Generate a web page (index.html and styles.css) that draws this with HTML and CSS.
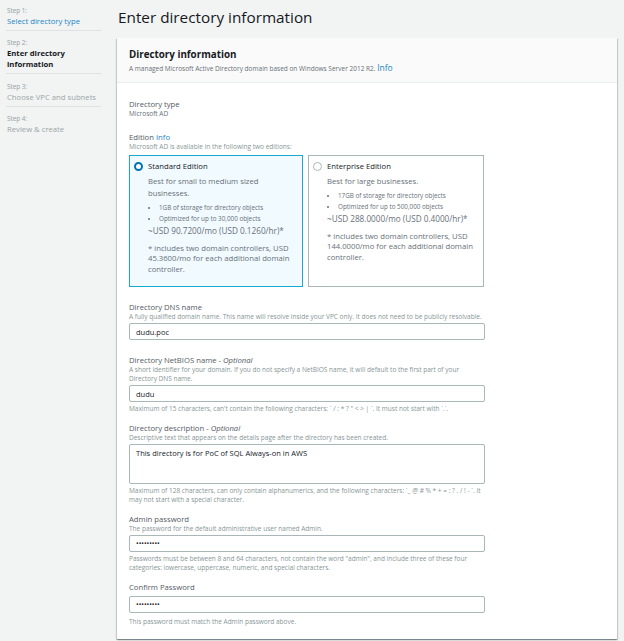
FILE: index.html
```html
<!DOCTYPE html>
<html lang="en">
<head>
<meta charset="utf-8">
<title>Enter directory information</title>
<link rel="stylesheet" href="styles.css">
</head>
<body>
<div class="layout">
  <nav class="steps">
    <div class="step">
      <div class="step-num">Step 1:</div>
      <a class="step-name link" href="#">Select directory type</a>
    </div>
    <div class="step">
      <div class="step-num">Step 2:</div>
      <div class="step-name current">Enter directory information</div>
    </div>
    <div class="step">
      <div class="step-num">Step 3:</div>
      <div class="step-name muted">Choose VPC and subnets</div>
    </div>
    <div class="step last">
      <div class="step-num">Step 4:</div>
      <div class="step-name muted">Review &amp; create</div>
    </div>
  </nav>

  <main class="main">
    <h1 class="page-title">Enter directory information</h1>
    <section class="panel">
      <header class="panel-head">
        <h2 class="panel-title">Directory information</h2>
        <p class="panel-sub">A managed Microsoft Active Directory domain based on Windows Server 2012 R2. <a class="info big" href="#">Info</a></p>
      </header>
      <div class="panel-body">
        <div class="field type">
          <div class="label">Directory type</div>
          <div class="value">Microsoft AD</div>
        </div>

        <div class="field edition">
          <div class="label">Edition <a class="info" href="#">Info</a></div>
          <div class="desc">Microsoft AD is available in the following two editions:</div>
          <div class="cards">
            <div class="card selected">
              <div class="card-title"><span class="radio on"></span>Standard Edition</div>
              <div class="card-body">
                <p class="card-text">Best for small to medium sized businesses.</p>
                <ul class="bullets">
                  <li>1GB of storage for directory objects</li>
                  <li>Optimized for up to 30,000 objects</li>
                </ul>
                <p class="card-text price">~USD 90.7200/mo (USD 0.1260/hr)*</p>
                <p class="card-text note">* includes two domain controllers, USD 45.3600/mo for each additional domain controller.</p>
              </div>
            </div>
            <div class="card">
              <div class="card-title"><span class="radio"></span>Enterprise Edition</div>
              <div class="card-body">
                <p class="card-text">Best for large businesses.</p>
                <ul class="bullets">
                  <li>17GB of storage for directory objects</li>
                  <li>Optimized for up to 500,000 objects</li>
                </ul>
                <p class="card-text price">~USD 288.0000/mo (USD 0.4000/hr)*</p>
                <p class="card-text note">* includes two domain controllers, USD 144.0000/mo for each additional domain controller.</p>
              </div>
            </div>
          </div>
        </div>

        <div class="field dns">
          <div class="label">Directory DNS name</div>
          <div class="desc">A fully qualified domain name. This name will resolve inside your VPC only. It does not need to be publicly resolvable.</div>
          <input class="input" type="text" value="dudu.poc">
        </div>

        <div class="field">
          <div class="label">Directory NetBIOS name - <i>Optional</i></div>
          <div class="desc narrow">A short identifier for your domain. If you do not specify a NetBIOS name, it will default to the first part of your Directory DNS name.</div>
          <input class="input" type="text" value="dudu">
          <div class="hint">Maximum of 15 characters, can't contain the following characters: ` / : * ? " &lt; &gt; | `. It must not start with `.`.</div>
        </div>

        <div class="field">
          <div class="label">Directory description - <i>Optional</i></div>
          <div class="desc">Descriptive text that appears on the details page after the directory has been created.</div>
          <textarea class="input area">This directory is for PoC of SQL Always-on in AWS</textarea>
          <div class="hint narrow">Maximum of 128 characters, can only contain alphanumerics, and the following characters: `_ @ # % * + = : ? . / ! - `. It may not start with a special character.</div>
        </div>

        <div class="field">
          <div class="label">Admin password</div>
          <div class="desc">The password for the default administrative user named Admin.</div>
          <input class="input pw" type="password" value="aaaaaaaaa">
          <div class="hint narrow">Passwords must be between 8 and 64 characters, not contain the word "admin", and include three of these four categories: lowercase, uppercase, numeric, and special characters.</div>
        </div>

        <div class="field last">
          <div class="label spaced">Confirm Password</div>
          <input class="input pw" type="password" value="aaaaaaaaa">
          <div class="hint low">This password must match the Admin password above.</div>
        </div>
      </div>
    </section>
  </main>
</div>
</body>
</html>
```

FILE: styles.css
```css
* { box-sizing: border-box; }
html, body { margin: 0; padding: 0; }
body {
  background: #f2f3f3;
  font-family: "Open Sans", "Liberation Sans", sans-serif;
  color: #16191f;
  width: 624px;
  height: 641px;
  overflow: hidden;
}
p { margin: 0; }
a { text-decoration: none; }

.layout { display: flex; }

/* ---------- steps sidebar ---------- */
.steps {
  width: 95px;
  margin-left: 6px;
  padding-top: 4.5px;
  flex: none;
}
.step {
  border-bottom: 1px solid #dfe2e2;
  padding: 0 0 3px 1px;
  margin-bottom: 6.5px;
}
.step.last { border-bottom: none; }
.step-num { font-size: 6.3px; line-height: 11px; color: #95a1a2; }
.step-name { display: block; font-size: 7.7px; line-height: 11px; }
.step-name.link { color: #1b86c9; }
.step-name.current { color: #16191f; font-weight: 700; }
.step-name.muted { color: #9ba7a8; }

/* ---------- main ---------- */
.main { flex: 1; padding-left: 16px; }
.page-title {
  margin: 0;
  font-size: 15.3px;
  font-weight: 400;
  line-height: 22px;
  padding: 6px 0 0 1px;
  height: 38px;
  color: #16191f;
}

.panel {
  width: 500px;
  background: #fff;
  box-shadow: 0 1px 1px 0 rgba(0, 28, 36, .3), 1px 1px 1px 0 rgba(0, 28, 36, .15), -1px 1px 1px 0 rgba(0, 28, 36, .15);
}
.panel-head {
  background: #fafafa;
  border-bottom: 1px solid #eaeded;
  padding: 10px 12px 0;
  height: 45px;
}
.panel-title { margin: 0; font-size: 9.8px; font-weight: 700; line-height: 13px; color: #16191f; }
.panel-sub { font-size: 6.5px; color: #687078; line-height: 14px; }
.info { color: #1b86c9; }
.info.big { font-size: 8.5px; }

.panel-body { padding: 16px 12px 13px; }

/* ---------- fields ---------- */
.field { margin-bottom: 10px; }
.field.type { margin-bottom: 14px; }
.field.edition { margin-bottom: 15px; }
.field.dns { margin-bottom: 15px; }
.field.last { margin-bottom: 0; }
.label { font-size: 7.7px; line-height: 10px; color: #545b64; }
.label.spaced { margin-bottom: 4px; }
.label i { font-style: italic; }
.value { font-size: 6.5px; line-height: 9px; color: #687078; }
.desc { font-size: 6.5px; line-height: 9px; color: #879596; margin-bottom: 2px; }
.hint { font-size: 6.5px; line-height: 9px; color: #879596; margin-top: 2px; }
.hint.low { margin-top: 4px; }
.narrow { width: 355px; }

/* ---------- edition cards ---------- */
.cards {
  display: grid;
  grid-template-columns: 174px 176px;
  gap: 5px;
  margin-top: 4px;
}
.card {
  border: 1px solid #aab7b8;
  height: 132px;
  padding: 4px 6px 0 4px;
  background: #fff;
}
.card.selected { border-color: #19a8d2; background: #f1faff; }
.card-title {
  display: flex;
  align-items: center;
  font-size: 7.7px;
  line-height: 12px;
  color: #16191f;
}
.radio {
  width: 9px; height: 9px;
  border-radius: 50%;
  border: 1px solid #aab7b8;
  background: #fff;
  margin-right: 5px;
  flex: none;
}
.radio.on { border: 2.5px solid #0073bb; }
.card-body { padding-left: 14px; }
.card-text { font-size: 7.7px; line-height: 12px; color: #687078; margin-top: 3px; }
.bullets {
  margin: 2.5px 0 1.5px;
  padding-left: 11px;
  font-size: 6.3px;
  line-height: 11px;
  color: #687078;
}
.price { margin-top: 0; font-size: 8.2px; }
.note { margin-top: 5.5px; line-height: 10.5px; }

/* ---------- inputs ---------- */
.input {
  display: block;
  width: 356px;
  height: 17px;
  border: 1px solid #aab7b8;
  border-radius: 2px;
  padding: 0 6px;
  font-family: "Open Sans", "Liberation Sans", sans-serif;
  font-size: 7.5px;
  color: #16191f;
  background: #fff;
  outline: none;
  margin: 0;
}
.input.area {
  height: 40px;
  resize: none;
  padding: 3px 6px;
  line-height: 11px;
}
.input.pw { font-size: 7px; }
```
